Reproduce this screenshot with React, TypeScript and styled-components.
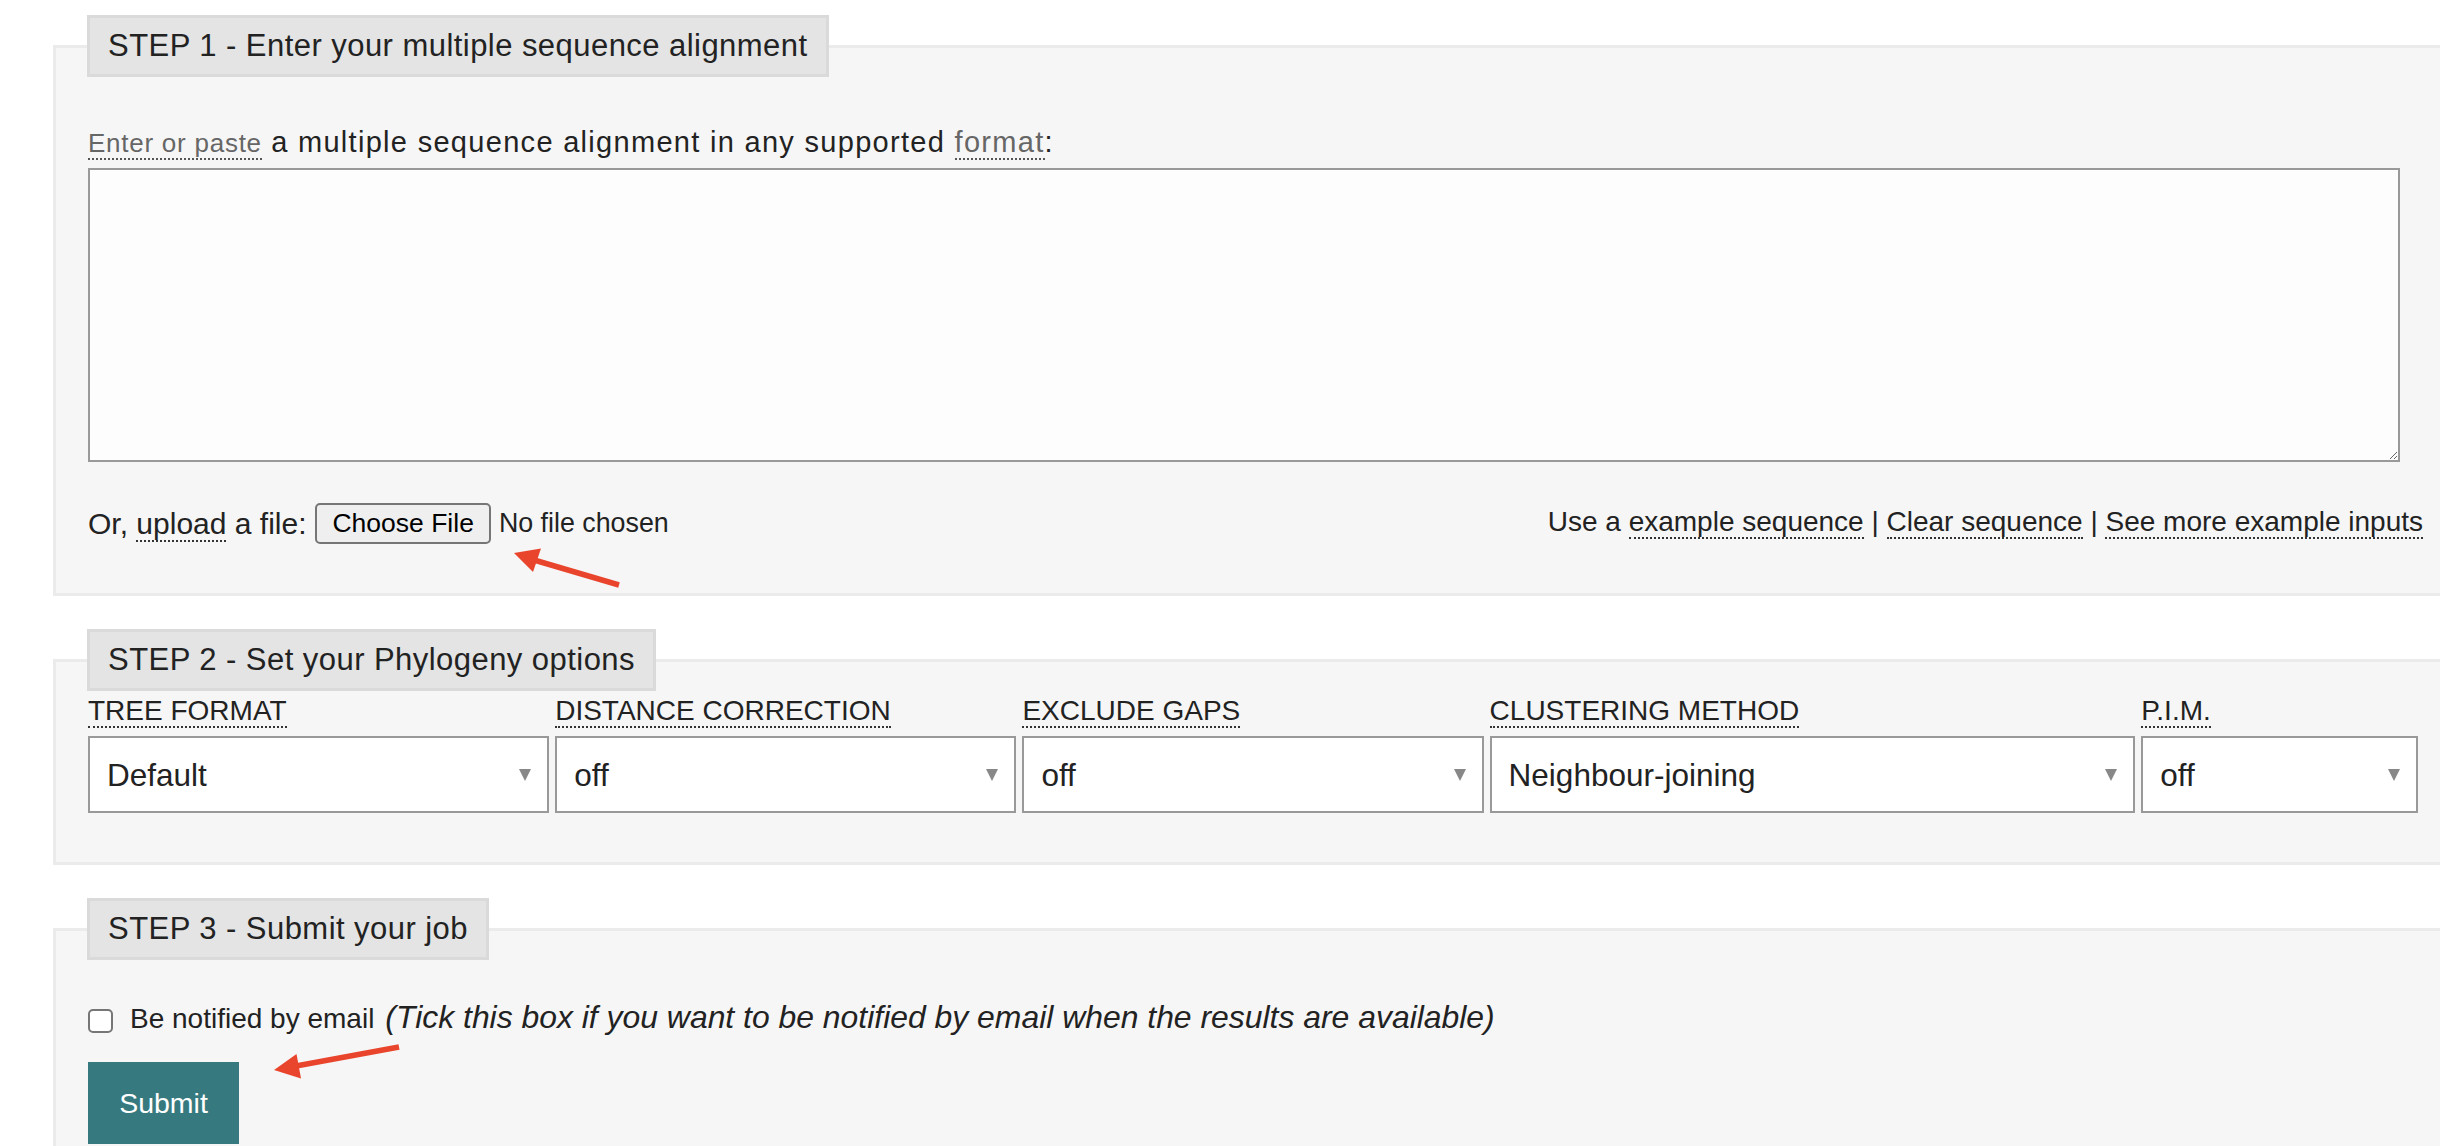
import React from "react";
import styled, { createGlobalStyle } from "styled-components";

const GlobalStyle = createGlobalStyle`
  html, body {
    margin: 0;
    padding: 0;
    overflow: hidden;
    background: #ffffff;
  }
  body {
    font-family: "Liberation Sans", Arial, Helvetica, sans-serif;
    color: #222222;
  }
  *, *::before, *::after { box-sizing: border-box; }
`;

const FONT = `"Liberation Sans", Arial, Helvetica, sans-serif`;

const Page = styled.div`
  position: relative;
  width: 2440px;
  padding: 15px 0 0 53px;
`;

const Step = styled.fieldset`
  width: 2405px;
  min-inline-size: 0;
  margin: 0 0 33px;
  padding: 0 32px 49px;
  border: 3px solid #ebebeb;
  background: #f6f6f6;
`;

const StepLegend = styled.legend`
  margin: 0 0 0 -1px;
  padding: 0 18px;
  height: 62px;
  line-height: 56px;
  border: 3px solid #dadada;
  background: #e4e4e4;
  font-size: 31px;
  letter-spacing: 0.45px;
  color: #222222;
  white-space: nowrap;
`;

const Intro = styled.div`
  margin-top: 48px;
  font-size: 29px;
  line-height: 34px;
  letter-spacing: 1.3px;
  white-space: nowrap;
`;

const Dotted = styled.span<{ $muted?: boolean; $small?: boolean }>`
  color: ${(p) => (p.$muted ? "#666666" : "inherit")};
  border-bottom: 2px dotted ${(p) => (p.$muted ? "#555555" : "#333333")};
  ${(p) => (p.$small ? "font-size: 26px; letter-spacing: 0.75px;" : "")}
`;

const SequenceInput = styled.textarea`
  display: block;
  width: 99%;
  height: 294px;
  margin: 8px 0 0;
  border: 2px solid #999999;
  border-radius: 0;
  background: #fdfdfd;
  font-family: "Liberation Mono", monospace;
  font-size: 20px;
`;

const UploadRow = styled.div`
  display: flex;
  align-items: center;
  justify-content: space-between;
  height: 41px;
  margin-top: 41px;
`;

const UploadLeft = styled.div`
  display: flex;
  align-items: center;
`;

const UploadText = styled.span`
  font-size: 30px;
  white-space: nowrap;
`;

const FileInput = styled.input`
  margin: 0 0 0 9px;
  width: 390px;
  height: 41px;
  padding: 0;
  font-family: ${FONT};
  font-size: 26.8px;
  color: #222222;
  &::file-selector-button {
    font-family: ${FONT};
    font-size: 26.5px;
    height: 41px;
    padding: 0 15px;
    margin: 0 8px 0 0;
    border: 2px solid #767676;
    border-radius: 5px;
    background: #efefef;
    color: #000000;
  }
`;

const ExampleLinks = styled.div`
  font-size: 28px;
  padding-bottom: 4px;
  white-space: nowrap;
`;

const OptionsGrid = styled.div`
  display: grid;
  grid-template-columns: 5fr 5fr 5fr 7fr 3fr;
  column-gap: 6px;
  width: calc(100% - 5px);
  padding-top: 4px;
`;

const Option = styled.div`
  display: flex;
  flex-direction: column;
  align-items: flex-start;
`;

const OptionLabel = styled.div`
  font-size: 28px;
  line-height: 32px;
  text-transform: uppercase;
  white-space: nowrap;
`;

const SelectWrap = styled.div`
  position: relative;
  align-self: stretch;
  margin-top: 9px;
  &::after {
    content: "";
    position: absolute;
    right: 18px;
    top: 50%;
    margin-top: -6px;
    border-left: 6.5px solid transparent;
    border-right: 6.5px solid transparent;
    border-top: 12px solid #888888;
    pointer-events: none;
  }
`;

const Select = styled.select`
  appearance: none;
  -webkit-appearance: none;
  display: block;
  width: 100%;
  height: 77px;
  margin: 0;
  padding: 0 44px 0 17px;
  border: 2px solid #999999;
  border-radius: 0;
  background: #ffffff;
  font-family: ${FONT};
  font-size: 31.5px;
  color: #222222;
`;

const NotifyRow = styled.div`
  display: flex;
  align-items: center;
  height: 40px;
  margin-top: 37px;
`;

const Checkbox = styled.input`
  appearance: none;
  -webkit-appearance: none;
  flex-shrink: 0;
  width: 25px;
  height: 24px;
  margin: 8px 17px 0 0;
  border: 2px solid #767676;
  border-radius: 5px;
  background: #ffffff;
`;

const NotifyText = styled.div`
  display: flex;
  align-items: baseline;
  gap: 11px;
  white-space: nowrap;
`;

const NotifyLabel = styled.label`
  font-size: 28px;
`;

const NotifyHint = styled.span`
  font-size: 31.9px;
  font-style: italic;
`;

const SubmitButton = styled.button`
  display: block;
  width: 151px;
  height: 82px;
  margin-top: 25px;
  padding: 0;
  border: 0;
  background: #367a7f;
  color: #ffffff;
  font-family: ${FONT};
  font-size: 28.5px;
`;

const Annotations = styled.svg`
  position: absolute;
  top: 0;
  left: 0;
  pointer-events: none;
`;

const ARROW = "#e9452d";

const options: { label: string; values: string[] }[] = [
  { label: "Tree format", values: ["Default", "Newick", "ClustalW", "Distance matrix"] },
  { label: "Distance correction", values: ["off", "on"] },
  { label: "Exclude gaps", values: ["off", "on"] },
  { label: "Clustering method", values: ["Neighbour-joining", "UPGMA"] },
  { label: "P.I.M.", values: ["off", "on"] },
];

export default function App() {
  return (
    <>
      <GlobalStyle />
      <Page>
        <Step>
          <StepLegend>STEP 1 - Enter your multiple sequence alignment</StepLegend>
          <Intro>
            <Dotted $muted $small>Enter or paste</Dotted> a multiple sequence alignment in any supported{" "}
            <Dotted $muted>format</Dotted>:
          </Intro>
          <SequenceInput aria-label="sequence" />
          <UploadRow>
            <UploadLeft>
              <UploadText>
                Or, <Dotted>upload</Dotted> a file:
              </UploadText>
              <FileInput type="file" />
            </UploadLeft>
            <ExampleLinks>
              Use a <Dotted>example sequence</Dotted> | <Dotted>Clear sequence</Dotted> |{" "}
              <Dotted>See more example inputs</Dotted>
            </ExampleLinks>
          </UploadRow>
        </Step>

        <Step>
          <StepLegend>STEP 2 - Set your Phylogeny options</StepLegend>
          <OptionsGrid>
            {options.map((o) => (
              <Option key={o.label}>
                <OptionLabel>
                  <Dotted>{o.label}</Dotted>
                </OptionLabel>
                <SelectWrap>
                  <Select defaultValue={o.values[0]}>
                    {o.values.map((v) => (
                      <option key={v} value={v}>
                        {v}
                      </option>
                    ))}
                  </Select>
                </SelectWrap>
              </Option>
            ))}
          </OptionsGrid>
        </Step>

        <Step>
          <StepLegend>STEP 3 - Submit your job</StepLegend>
          <NotifyRow>
            <Checkbox type="checkbox" id="notify" />
            <NotifyText>
              <NotifyLabel htmlFor="notify">Be notified by email</NotifyLabel>
              <NotifyHint>(Tick this box if you want to be notified by email when the results are available)</NotifyHint>
            </NotifyText>
          </NotifyRow>
          <SubmitButton type="button">Submit</SubmitButton>
        </Step>

        <Annotations width={2440} height={1146} viewBox="0 0 2440 1146">
          <line x1={619} y1={585} x2={534} y2={560} stroke={ARROW} strokeWidth={5.5} />
          <polygon points="514,553 541,548.5 533,572" fill={ARROW} />
          <line x1={399} y1={1047} x2={296} y2={1066} stroke={ARROW} strokeWidth={5.5} />
          <polygon points="274,1070 296.5,1054 301,1078.5" fill={ARROW} />
        </Annotations>
      </Page>
    </>
  );
}
